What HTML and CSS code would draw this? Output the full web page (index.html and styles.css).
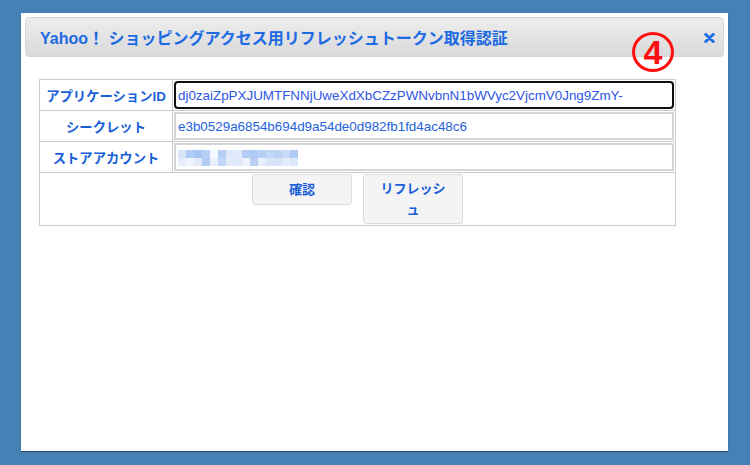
FILE: index.html
```html
<!DOCTYPE html>
<html lang="ja">
<head>
<meta charset="utf-8">
<title>Yahoo！ ショッピングアクセス用リフレッシュトークン取得認証</title>
<link rel="stylesheet" href="styles.css">
</head>
<body>
<div class="dialog">
  <div class="header">
    <span class="title">Yahoo！ ショッピングアクセス用リフレッシュトークン取得認証</span>
    <span class="close" aria-label="close">
      <svg width="11" height="10" viewBox="0 0 11 10"><path d="M1.8 1.5 L9.2 8.5 M9.2 1.5 L1.8 8.5" stroke="#1c6ee8" stroke-width="3" stroke-linecap="round"/></svg>
    </span>
    <span class="badge">4</span>
  </div>
  <table class="form">
    <tr>
      <td class="label">アプリケーションID</td>
      <td class="field"><input class="inp focus" type="text" value="dj0zaiZpPXJUMTFNNjUweXdXbCZzPWNvbnN1bWVyc2VjcmV0Jng9ZmY-"></td>
    </tr>
    <tr>
      <td class="label">シークレット</td>
      <td class="field"><input class="inp" type="text" value="e3b0529a6854b694d9a54de0d982fb1fd4ac48c6"></td>
    </tr>
    <tr>
      <td class="label">ストアアカウント</td>
      <td class="field"><div class="inp blurbox"><span class="mosaic"></span></div></td>
    </tr>
    <tr>
      <td class="actions" colspan="2">
        <div class="btns">
          <button class="btn" type="button">確認</button>
          <button class="btn" type="button">リフレッシュ</button>
        </div>
      </td>
    </tr>
  </table>
</div>
</body>
</html>
```

FILE: styles.css
```css
html, body {
  margin: 0;
  padding: 0;
}
body {
  background: #4581b5;
  width: 750px;
  height: 465px;
  overflow: hidden;
  font-family: "Liberation Sans", "Noto Sans CJK JP", sans-serif;
}
.dialog {
  margin: 13px 0 0 21px;
  width: 707px;
  height: 438px;
  box-sizing: border-box;
  padding: 4px;
  background: #fff;
  box-shadow: 0 1px 1px rgba(0, 0, 0, 0.35);
}
.header {
  position: relative;
  height: 40px;
  box-sizing: border-box;
  border: 1px solid #d6d6d6;
  border-radius: 4px;
  background: linear-gradient(#ededed, #dadada);
  display: flex;
  align-items: center;
  justify-content: space-between;
  padding: 0 8px 0 14px;
}
.title {
  font-size: 16px;
  font-weight: bold;
  color: #1c6ae4;
  white-space: nowrap;
}
.close {
  display: flex;
  margin-top: 1px;
}
.badge {
  position: absolute;
  left: 606px;
  top: 14px;
  width: 36px;
  height: 34px;
  border: 3px solid #ff1010;
  border-radius: 50%;
  color: #ff1010;
  font-size: 34px;
  font-weight: bold;
  line-height: 34px;
  text-align: center;
}
.form {
  margin: 22px 0 0 14px;
  width: 637px;
  border-collapse: collapse;
}
.form td {
  border: 1px solid #cccccc;
  padding: 1px;
}
.form td.label {
  width: 130px;
  height: 28px;
  text-align: center;
  font-size: 13.33px;
  font-weight: bold;
  color: #1a5fd8;
  white-space: nowrap;
}
.inp {
  display: block;
  width: 500px;
  height: 28px;
  box-sizing: border-box;
  margin: 0;
  padding: 0 2px;
  border: 2px solid #d6d6d6;
  font-family: "Liberation Sans", "Noto Sans CJK JP", sans-serif;
  font-size: 13.4px;
  color: #2462dc;
  background: #fff;
  outline: none;
}
.inp.focus {
  border: 2px solid #111;
  border-radius: 4px;
  color: #2d56e6;
}
.blurbox {
  display: flex;
  align-items: center;
}
.mosaic {
  display: block;
  width: 120px;
  height: 16px;
  margin-top: 2px;
  background:
    linear-gradient(to right,
      #d8e4f8 0 8px, #b0cbf5 8px 16px, #a5c3f3 16px 24px, #b8d0f5 24px 32px,
      #f5f8fe 32px 40px, #b5cef5 40px 48px, #dfe8fb 48px 56px, #e3ebfb 56px 64px,
      #b3cdf6 64px 72px, #b0cbf5 72px 80px, #b6cff6 80px 88px, #c3d7f8 88px 96px,
      #bcd2f6 96px 104px, #c8daf8 104px 112px, #b0cbf5 112px 120px) top / 120px 8px no-repeat,
    linear-gradient(to right,
      #e5edfb 0 8px, #eef3fc 8px 16px, #e2eafa 16px 24px, #b3cdf5 24px 32px,
      #e8effb 32px 40px, #c0d5f7 40px 48px, #e3ebfb 48px 56px, #dde8fa 56px 64px,
      #eef3fd 64px 72px, #b8d0f6 72px 80px, #e8effc 80px 88px, #dae5f9 88px 96px,
      #d7e3f8 96px 104px, #e5edfb 104px 112px, #dce7fa 112px 120px) bottom / 120px 8px no-repeat;
}
.form td.actions {
  height: 50px;
  vertical-align: top;
}
.btns {
  display: flex;
  justify-content: center;
  align-items: flex-start;
  gap: 11px;
}
.btn {
  width: 100px;
  min-height: 31px;
  box-sizing: border-box;
  padding: 3px 12px;
  border: 1px solid #dcdcdc;
  border-radius: 3px;
  background: #f4f4f4;
  font-family: "Liberation Sans", "Noto Sans CJK JP", sans-serif;
  font-size: 13px;
  font-weight: bold;
  line-height: 21px;
  color: #1a5fd8;
}
```
